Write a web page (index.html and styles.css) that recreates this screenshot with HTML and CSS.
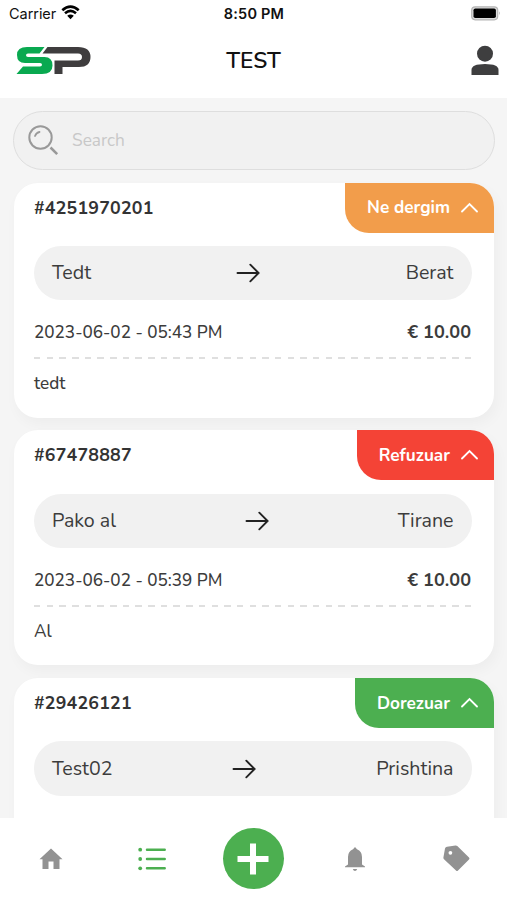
FILE: index.html
```
<!DOCTYPE html>
<html lang="sq">
<head>
<meta charset="utf-8">
<meta name="viewport" content="width=device-width, initial-scale=1">
<title>TEST</title>
<link rel="stylesheet" href="styles.css">
</head>
<body>
<div class="app">
  <header class="top">
    <div class="status">
      <div class="carrier"><span>Carrier</span>
        <svg width="19" height="15" viewBox="0 0 19 15"><path d="M1.300 5.200Q9.500 -2 17.700 5.200M4 8.200Q9.500 3.700 15 8.200" fill="none" stroke="#000" stroke-width="2.700"/><path d="M6.200 10.800Q9.500 8 12.800 10.800L9.500 14.300Z"/></svg>
      </div>
      <div class="clock">8:50 PM</div>
      <svg class="battery" width="30" height="15" viewBox="0 0 30 15"><rect x=".7" y=".8" width="26" height="13" rx="3.5" fill="#ddd" stroke="#b5b5b5" stroke-width="1.2"/><rect x="2.5" y="2.5" width="22.4" height="9.6" rx="1.8"/><path d="M28 5.3q1.700 2 0 4z" fill="#aaa"/></svg>
    </div>
    <div class="title-bar">
      <svg class="logo" width="75" height="29" viewBox="0 0 75 29"><path d="M28.500 1H11Q1 1 1 9 1 17 9 17H24Q26 17 26 18.800 26 20.500 24 20.500H7L.500 28H26Q36.500 28 36.500 19.500 36.500 11 28.500 11H12Q10 11 10 9.200 10 7.500 12 7.500H23.500Z" fill="#09a950"/><path d="M31.500 1H62Q74.500 1 74.500 11 74.500 21 63 21H46.500V28H38.500V14.500H62Q66 14.500 66 11 66 7.500 62 7.500H26.500Z" fill="#3f3d3e"/></svg>
      <h1>TEST</h1>
      <svg class="user" width="28" height="31" viewBox="0 0 28 31"><circle cx="14" cy="8.700" r="8" fill="#3e3e3f"/><path d="M.5 30V25Q.5 19 14 19T27.500 25V30Z" fill="#3e3e3f"/></svg>
    </div>
  </header>
  <main>
    <div class="search">
      <svg width="32" height="32" viewBox="0 0 32 32" fill="none" stroke="#999" stroke-linecap="round"><circle cx="12.500" cy="12.500" r="11.200" stroke-width="2"/><path d="M7 11Q8.500 7.500 11.500 7" stroke-width="1.800"/><path d="M22.500 22.500L29.200 29.200" stroke-width="2.500" stroke-linecap="butt"/></svg>
      <span>Search</span>
    </div>
    <article class="card">
      <div class="head"><span class="code">#4251970201</span><div class="badge orange"><span>Ne dergim</span><svg width="17" height="11" viewBox="0 0 17 11"><path d="M1 9.500L8.500 2L16 9.500"/></svg></div></div>
      <div class="route"><span>Tedt</span><svg width="24" height="20" viewBox="0 0 24 20"><path d="M1.500 10H22.500M14.300 1.700L22.600 10L14.300 18.300"/></svg><span>Berat</span></div>
      <div class="meta"><time>2023-06-02 - 05:43 PM</time><b>€ 10.00</b></div>
      <div class="dash"></div>
      <p>tedt</p>
    </article>
    <article class="card">
      <div class="head"><span class="code">#67478887</span><div class="badge red"><span>Refuzuar</span><svg width="17" height="11" viewBox="0 0 17 11"><path d="M1 9.500L8.500 2L16 9.500"/></svg></div></div>
      <div class="route"><span>Pako al</span><svg width="24" height="20" viewBox="0 0 24 20"><path d="M1.500 10H22.500M14.300 1.700L22.600 10L14.300 18.300"/></svg><span>Tirane</span></div>
      <div class="meta"><time>2023-06-02 - 05:39 PM</time><b>€ 10.00</b></div>
      <div class="dash"></div>
      <p>Al</p>
    </article>
    <article class="card">
      <div class="head"><span class="code">#29426121</span><div class="badge green"><span>Dorezuar</span><svg width="17" height="11" viewBox="0 0 17 11"><path d="M1 9.500L8.500 2L16 9.500"/></svg></div></div>
      <div class="route"><span>Test02</span><svg width="24" height="20" viewBox="0 0 24 20"><path d="M1.500 10H22.500M14.300 1.700L22.600 10L14.300 18.300"/></svg><span>Prishtina</span></div>
    </article>
  </main>
  <nav>
    <svg width="24" height="22" viewBox="0 0 24 22"><path d="M12 .500L23.500 11.200H20.500V21H14.500V13.500H9.500V21H3.500V11.200H.500Z" fill="#929292"/></svg>
    <svg width="28" height="24" viewBox="0 0 28 24"><g fill="#4caf50"><circle cx="2.200" cy="2.700" r="1.900"/><circle cx="2.200" cy="12" r="1.900"/><circle cx="2.200" cy="21.300" r="1.900"/></g><path d="M9 2.700H26.700M9 12H26.700M9 21.300H26.700" stroke="#4caf50" stroke-width="2.500" stroke-linecap="round"/></svg>
    <div class="add"><svg width="32" height="32" viewBox="0 0 32 32"><path d="M13 .500H19V13H31.500V19H19V31.500H13V19H.500V13H13Z" fill="#fff"/></svg></div>
    <svg width="20" height="24" viewBox="0 0 20 24"><path d="M10 0L12 2.300Q17 4.300 17 10V17.500L20 19.500V20.300H0V19.500L3 17.500V10Q3 4.300 8 2.300ZM7.800 22H12.200Q11.500 24 10 24T7.800 22Z" fill="#929292"/></svg>
    <svg width="27" height="27" viewBox="0 0 27 27"><path fill-rule="evenodd" d="M2 3.500Q2.500 2 4 1.700L12.500.400Q13.500.300 14.300 1L26 12.500Q27 13.500 26 14.500L15 25.600Q14 26.600 13 25.600L1 14.200Q.300 13.500.400 12.500ZM9.300 7.800A1.900 1.900 0 1 0 5.500 7.800A1.900 1.900 0 1 0 9.300 7.800Z" fill="#929292"/></svg>
  </nav>
</div>
</body>
</html>
```
FILE: styles.css
```
* { box-sizing: border-box; }
body { margin: 0; background: #fff; }
svg { display: block; flex: none; }
.app {
  width: 507px;
  height: 900px;
  display: flex;
  flex-direction: column;
  overflow: hidden;
  font-family: "Nunito", "Open Sans", sans-serif;
  color: #3c3c3c;
  background: #f5f5f5;
}
.top { flex: none; height: 98px; background: #fff; color: #111; }
.status {
  height: 27px;
  padding: 0 6px 0 9px;
  display: grid;
  grid-template-columns: 1fr auto 1fr;
  align-items: center;
  font: 400 14.5px/27px "Inter", sans-serif;
}
.carrier { display: flex; align-items: center; gap: 5px; letter-spacing: -0.05px; }
.carrier svg { margin-top: -2px; }
.clock { font-weight: 600; font-size: 14.5px; letter-spacing: 0.2px; margin-right: 2px; }
.battery { justify-self: end; margin-top: -1px; }
.title-bar {
  height: 66px;
  padding: 0 8px 0 16px;
  display: grid;
  grid-template-columns: 1fr auto 1fr;
  align-items: center;
}
.title-bar h1 { margin: 1px 8px 0 0; font-size: 22.600px; font-weight: 600; }
.user { justify-self: end; }
main {
  flex: 1;
  min-height: 0;
  overflow: hidden;
  padding: 13px 13px 0 14px;
}
.search {
  height: 58.500px;
  margin: 0 -1px 13px;
  border: 1px solid #dedede;
  border-radius: 30px;
  background: #f1f1f1;
  display: flex;
  align-items: center;
  gap: 12px;
  padding-left: 14px;
  color: #c8c8c8;
  font-size: 17.300px;
}
.search svg { margin-top: 2px; }
.card {
  height: 235px;
  margin-bottom: 12.800px;
  border-radius: 24px;
  background: #fff;
  box-shadow: 3px 6px 14px rgba(0, 0, 0, .035);
}
.head { display: flex; justify-content: space-between; height: 50px; padding-left: 20px; }
.code { line-height: 50px; font-size: 17.800px; font-weight: 700; letter-spacing: .200px; color: #333; }
.badge {
  display: flex;
  align-items: center;
  gap: 11px;
  padding: 0 16px 0 22px;
  border-radius: 0 24px 0 24px;
  color: #fff;
  font-size: 17.200px;
  font-weight: 700;
}
.badge span { white-space: nowrap; }
.badge path { fill: none; stroke: #fff; stroke-width: 1.800; stroke-linecap: round; }
.badge svg { margin-top: -1px; }
.orange { background: #f29d4b; }
.red { background: #f44336; }
.green { background: #4caf50; }
.route {
  height: 54.500px;
  margin: 13.300px 22.500px 0 20px;
  padding: 0 18px;
  border-radius: 27.250px;
  background: #f1f1f1;
  display: flex;
  align-items: center;
  justify-content: space-between;
  font-size: 19.600px;
  line-height: 54px;
}
.route path { fill: none; stroke: #222; stroke-width: 1.900; stroke-linecap: round; }
.meta {
  height: 57px;
  margin: 0 23px 0 20px;
  padding-top: 8px;
  display: flex;
  align-items: center;
  justify-content: space-between;
  font-size: 17.150px;
  font-weight: 500;
  line-height: 49px;
}
.meta b { font-size: 18.100px; font-weight: 700; }
.dash {
  height: 2px;
  margin: 0 23px 0 20px;
  background: repeating-linear-gradient(90deg, #dfdfdf 0 6.500px, transparent 6.500px 12.680px);
}
.card p { margin: 0 20px; font-size: 17.150px; font-weight: 500; line-height: 49px; }
nav {
  flex: none;
  height: 82px;
  padding-bottom: 1px;
  background: #fff;
  display: grid;
  grid-template-columns: repeat(5, 1fr);
  place-items: center;
}
.add {
  width: 61px;
  height: 61px;
  border-radius: 50%;
  background: #4caf50;
  display: grid;
  place-items: center;
}
```
